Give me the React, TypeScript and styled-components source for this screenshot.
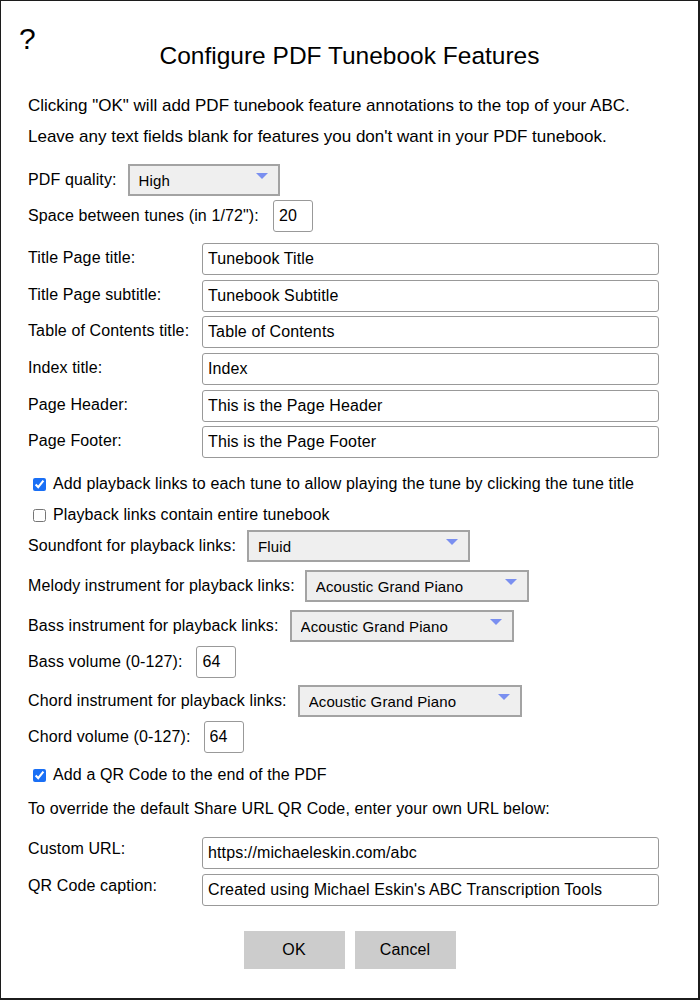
import React from "react";
import styled, { createGlobalStyle } from "styled-components";

const GlobalStyle = createGlobalStyle`
  html, body { margin: 0; padding: 0; background: #fff; }
  body { font-family: "Liberation Sans", Arial, Helvetica, sans-serif; color: #000; }
`;

const FONT = `"Liberation Sans", Arial, Helvetica, sans-serif`;
const TRACK = "0.12px";

const Frame = styled.div`
  box-sizing: border-box;
  width: 700px;
  height: 1000px;
  border-style: solid;
  border-color: #1c1c1c;
  border-width: 1px 2px 2px 1px;
  background: #fff;
  font-family: ${FONT};
  font-size: 16px;
  letter-spacing: ${TRACK};
  color: #000;
`;

const Header = styled.header`
  display: grid;
  grid-template-columns: 1fr auto 1fr;
  align-items: start;
  padding: 24px 18px 0;
`;

const Help = styled.span`
  font-size: 30px;
  line-height: 28px;
  letter-spacing: 0;
  justify-self: start;
  cursor: pointer;
`;

const Title = styled.h1`
  margin: 16px 0 0;
  font-size: 24.5px;
  line-height: 30px;
  letter-spacing: 0;
  font-weight: normal;
  text-align: center;
  white-space: nowrap;
`;

const Body = styled.main`
  padding: 0 27px;
  display: flex;
  flex-direction: column;
  align-items: flex-start;
`;

const Text = styled.p<{ $mt: number; $lead?: boolean }>`
  margin: ${(p) => p.$mt}px 0 0;
  font-size: ${(p) => (p.$lead ? 17 : 16)}px;
  letter-spacing: ${(p) => (p.$lead ? "0" : TRACK)};
  line-height: 20px;
  white-space: nowrap;
`;

const Row = styled.div<{ $mt: number; $gap: number }>`
  display: flex;
  align-items: center;
  gap: ${(p) => p.$gap}px;
  margin-top: ${(p) => p.$mt}px;
  height: 32px;
`;

const Label = styled.label`
  line-height: 20px;
  white-space: nowrap;
`;

const SelectWrap = styled.span<{ $w: number }>`
  position: relative;
  display: inline-flex;
  flex: none;
  width: ${(p) => p.$w}px;
  height: 32px;
`;

const Select = styled.select`
  appearance: none;
  -webkit-appearance: none;
  box-sizing: border-box;
  width: 100%;
  height: 100%;
  margin: 0;
  padding: 0 30px 0 9px;
  border: 2px solid #a3a3a3;
  border-radius: 0;
  background: #efefef;
  font-family: ${FONT};
  font-size: 15px;
  letter-spacing: ${TRACK};
  color: #000;
`;

const Arrow = styled.svg`
  position: absolute;
  top: 9px;
  right: 12px;
  width: 12px;
  height: 6px;
  pointer-events: none;
`;

const NumberInput = styled.input`
  box-sizing: border-box;
  width: 40px;
  height: 32px;
  margin: 0;
  padding: 0 5px;
  border: 1px solid #999;
  border-radius: 3px;
  font-family: ${FONT};
  font-size: 16px;
  letter-spacing: ${TRACK};
  color: #000;
  background: #fff;
`;

const FieldGrid = styled.div<{ $mt: number }>`
  display: grid;
  grid-template-columns: 174px 457px;
  grid-auto-rows: 32px;
  row-gap: 4.7px;
  margin-top: ${(p) => p.$mt}px;
`;

const GridLabel = styled.label<{ $offset: number }>`
  line-height: 20px;
  padding-top: ${(p) => p.$offset}px;
  white-space: nowrap;
`;

const TextInput = styled.input`
  box-sizing: border-box;
  width: 100%;
  height: 32px;
  margin: 0;
  padding: 0 5px;
  border: 1px solid #999;
  border-radius: 3px;
  font-family: ${FONT};
  font-size: 16px;
  letter-spacing: ${TRACK};
  color: #000;
  background: #fff;
`;

const CheckRow = styled.label<{ $mt: number }>`
  display: flex;
  align-items: center;
  gap: 7px;
  margin-top: ${(p) => p.$mt}px;
  padding-left: 5px;
  line-height: 20px;
  white-space: nowrap;
`;

const Check = styled.input`
  width: 13px;
  height: 13px;
  margin: 0;
  accent-color: #1a6ff5;
`;

const ButtonRow = styled.div`
  align-self: stretch;
  display: flex;
  justify-content: center;
  gap: 10px;
  margin-top: 25px;
`;

const Button = styled.button`
  width: 101px;
  height: 38px;
  margin: 0;
  padding: 0;
  border: none;
  background: #cccccc;
  font-family: ${FONT};
  font-size: 16px;
  letter-spacing: ${TRACK};
  color: #000;
  cursor: pointer;
`;

const DropArrow = () => (
  <Arrow viewBox="0 0 12 6" aria-hidden="true">
    <polygon points="0,0 12,0 6,6" fill="#7a8ff0" />
  </Arrow>
);

const Dropdown = ({ id, w, value, options }: { id: string; w: number; value: string; options: string[] }) => (
  <SelectWrap $w={w}>
    <Select id={id} defaultValue={value}>
      {options.map((o) => (
        <option key={o}>{o}</option>
      ))}
    </Select>
    <DropArrow />
  </SelectWrap>
);

const instruments = ["Acoustic Grand Piano", "Bright Acoustic Piano", "Electric Grand Piano", "Violin", "Flute"];

const textFields = [
  ["tp_title", "Title Page title:", "Tunebook Title"],
  ["tp_sub", "Title Page subtitle:", "Tunebook Subtitle"],
  ["toc", "Table of Contents title:", "Table of Contents"],
  ["idx", "Index title:", "Index"],
  ["hdr", "Page Header:", "This is the Page Header"],
  ["ftr", "Page Footer:", "This is the Page Footer"],
];

const qrFields = [
  ["qr_url", "Custom URL:", "https://michaeleskin.com/abc"],
  ["qr_cap", "QR Code caption:", "Created using Michael Eskin's ABC Transcription Tools"],
];

const Fields = ({ mt, offset, fields }: { mt: number; offset: number; fields: string[][] }) => (
  <FieldGrid $mt={mt}>
    {fields.map(([id, label, value]) => (
      <React.Fragment key={id}>
        <GridLabel htmlFor={id} $offset={offset}>
          {label}
        </GridLabel>
        <TextInput id={id} defaultValue={value} />
      </React.Fragment>
    ))}
  </FieldGrid>
);

export default function App() {
  return (
    <>
      <GlobalStyle />
      <Frame>
        <Header>
          <Help title="Help">?</Help>
          <Title>Configure PDF Tunebook Features</Title>
          <span />
        </Header>
        <Body>
          <Text $mt={25} $lead>
            Clicking "OK" will add PDF tunebook feature annotations to the top of your ABC.
          </Text>
          <Text $mt={11} $lead>
            Leave any text fields blank for features you don't want in your PDF tunebook.
          </Text>

          <Row $mt={17} $gap={11}>
            <Label htmlFor="quality">PDF quality:</Label>
            <Dropdown id="quality" w={152} value="High" options={["Draft", "Good", "High"]} />
          </Row>
          <Row $mt={4} $gap={14}>
            <Label htmlFor="space">Space between tunes (in 1/72"):</Label>
            <NumberInput id="space" defaultValue="20" />
          </Row>

          <Fields mt={11} offset={5} fields={textFields} />

          <CheckRow $mt={16}>
            <Check type="checkbox" defaultChecked />
            Add playback links to each tune to allow playing the tune by clicking the tune title
          </CheckRow>
          <CheckRow $mt={11}>
            <Check type="checkbox" />
            Playback links contain entire tunebook
          </CheckRow>

          <Row $mt={5} $gap={11}>
            <Label htmlFor="sf">Soundfont for playback links:</Label>
            <Dropdown id="sf" w={223} value="Fluid" options={["Fluid", "Musyng", "FatBoy", "Canvas"]} />
          </Row>
          <Row $mt={8} $gap={10}>
            <Label htmlFor="mel">Melody instrument for playback links:</Label>
            <Dropdown id="mel" w={224} value="Acoustic Grand Piano" options={instruments} />
          </Row>
          <Row $mt={8} $gap={11}>
            <Label htmlFor="bass">Bass instrument for playback links:</Label>
            <Dropdown id="bass" w={224} value="Acoustic Grand Piano" options={instruments} />
          </Row>
          <Row $mt={4} $gap={14}>
            <Label htmlFor="bassvol">Bass volume (0-127):</Label>
            <NumberInput id="bassvol" defaultValue="64" />
          </Row>
          <Row $mt={7} $gap={11}>
            <Label htmlFor="chord">Chord instrument for playback links:</Label>
            <Dropdown id="chord" w={224} value="Acoustic Grand Piano" options={instruments} />
          </Row>
          <Row $mt={4} $gap={13}>
            <Label htmlFor="chordvol">Chord volume (0-127):</Label>
            <NumberInput id="chordvol" defaultValue="64" />
          </Row>

          <CheckRow $mt={12}>
            <Check type="checkbox" defaultChecked />
            Add a QR Code to the end of the PDF
          </CheckRow>

          <Text $mt={14}>To override the default Share URL QR Code, enter your own URL below:</Text>

          <Fields mt={18} offset={2} fields={qrFields} />

          <ButtonRow>
            <Button type="button">OK</Button>
            <Button type="button">Cancel</Button>
          </ButtonRow>
        </Body>
      </Frame>
    </>
  );
}
